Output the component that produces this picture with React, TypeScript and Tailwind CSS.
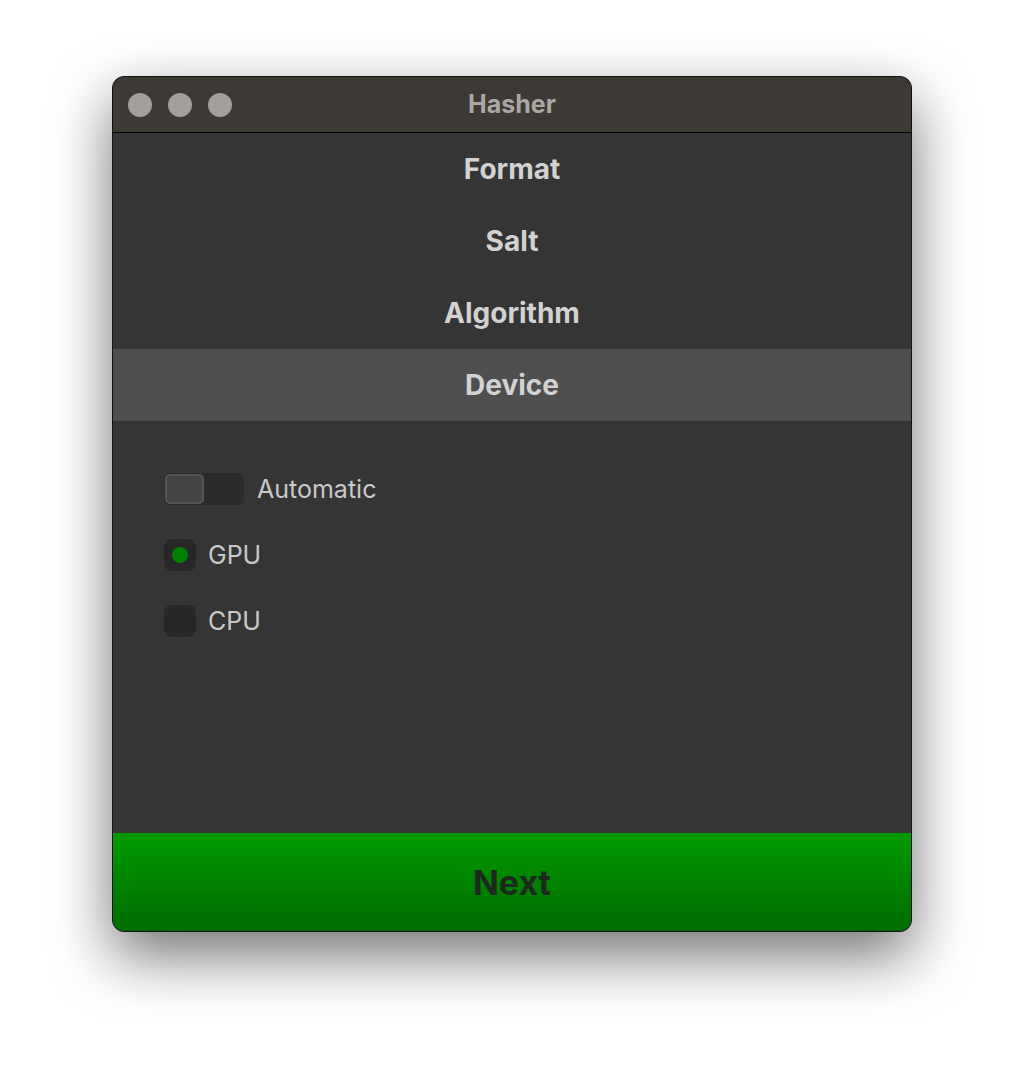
import { useState } from "react"

const steps = ["Format", "Salt", "Algorithm", "Device"]

export default function App() {
  const [auto, setAuto] = useState(false)
  const [device, setDevice] = useState("GPU")

  return (
    <div className="min-h-[1080px] w-[1024px] bg-white pl-[112px] pt-[76px] font-['Inter',sans-serif]">
      <div className="flex h-[856px] w-[800px] flex-col overflow-hidden rounded-[12px] border border-[#111] bg-[#353535] shadow-[0_24px_60px_rgba(0,0,0,0.55)]">
        {/* title bar */}
        <div className="grid h-[56px] shrink-0 grid-cols-3 items-center border-b border-black bg-[#3d3935] px-[15px]">
          <div className="flex gap-[16px]">
            <span className="h-[24px] w-[24px] rounded-full bg-[#a39f9b]" />
            <span className="h-[24px] w-[24px] rounded-full bg-[#a39f9b]" />
            <span className="h-[24px] w-[24px] rounded-full bg-[#a39f9b]" />
          </div>
          <div className="text-center text-[25px] font-bold text-[#aba8a4]">Hasher</div>
          <div />
        </div>

        {/* steps */}
        <div className="flex shrink-0 flex-col">
          {steps.map((s) => (
            <div
              key={s}
              className={
                s === "Device"
                  ? "flex h-[72px] items-center justify-center bg-[#4f4f4f] text-[28px] font-bold text-[#d2d2d2]"
                  : "flex h-[72px] items-center justify-center text-[28px] font-bold text-[#d2d2d2]"
              }
            >
              {s}
            </div>
          ))}
        </div>

        {/* device options */}
        <div className="flex flex-1 flex-col gap-[34px] pl-[51px] pt-[52px]">
          <button className="flex h-[32px] items-center gap-[13px]" onClick={() => setAuto(!auto)}>
            <span className="flex h-[32px] w-[80px] items-center rounded-[6px] bg-[#2b2b2b] p-[1px]">
              <span className="h-[30px] w-[39px] rounded-[5px] border-2 border-[#555] bg-[#444]" />
            </span>
            <span className="text-[25px] leading-[32px] text-[#c9c9c9]">Automatic</span>
          </button>
          {["GPU", "CPU"].map((d) => (
            <button key={d} className="flex h-[32px] items-center gap-[12px]" onClick={() => setDevice(d)}>
              <span className="flex h-[32px] w-[32px] items-center justify-center rounded-[8px] bg-[#272727]">
                {device === d && <span className="h-[16px] w-[16px] rounded-full bg-[#008000]" />}
              </span>
              <span className="text-[25px] leading-[32px] text-[#c9c9c9]">{d}</span>
            </button>
          ))}
        </div>

        {/* next */}
        <button className="flex h-[98px] shrink-0 items-center justify-center bg-gradient-to-b from-[#009a00] to-[#006c00] text-[34px] font-bold text-[#1b2a1b]">
          Next
        </button>
      </div>
    </div>
  )
}
